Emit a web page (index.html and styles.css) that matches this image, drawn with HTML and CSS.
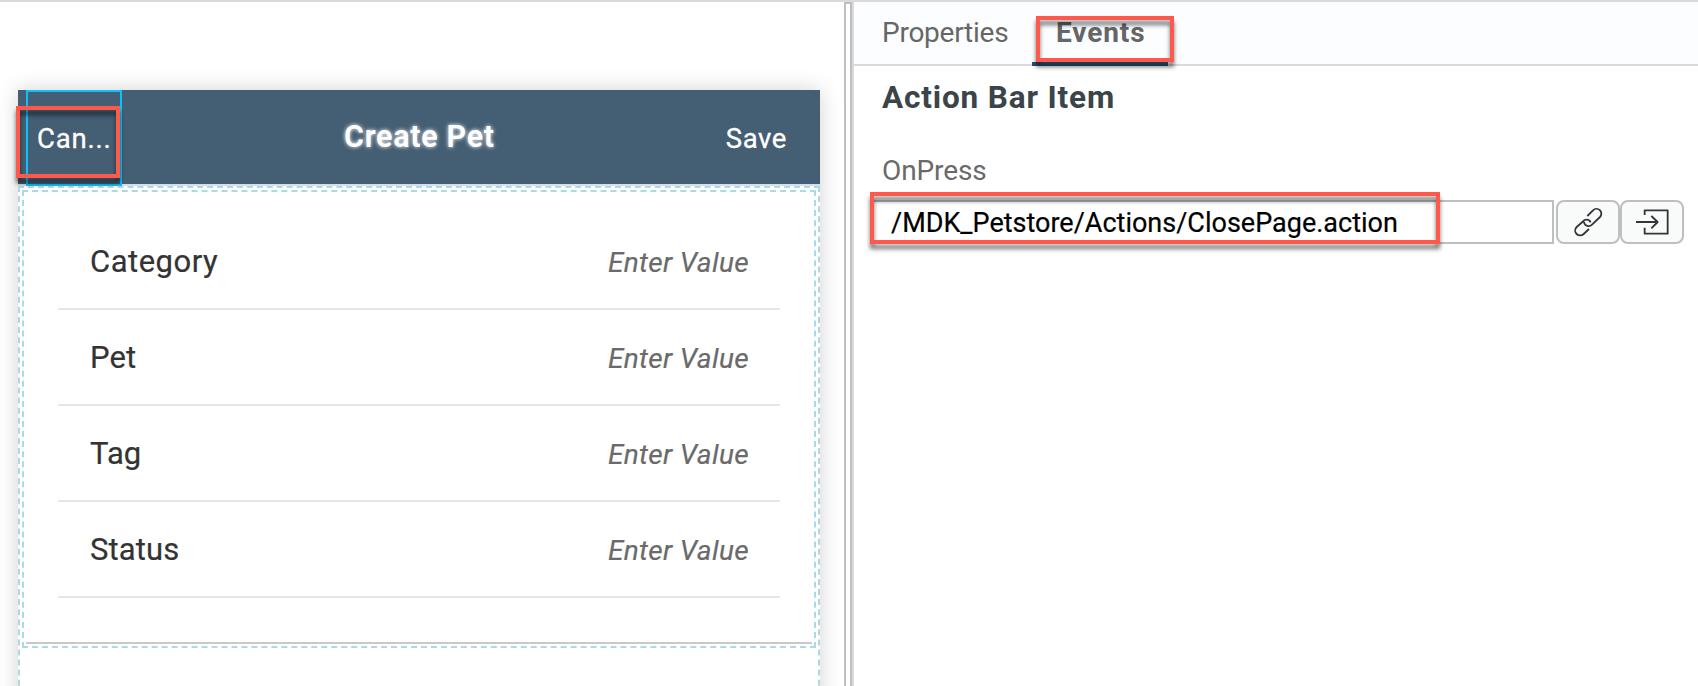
FILE: index.html
```html
<!DOCTYPE html>
<html lang="en">
<head>
<meta charset="utf-8">
<title>Create Pet</title>
<link rel="stylesheet" href="styles.css">
</head>
<body>
<div class="app">
  <main class="canvas">
    <section class="phone">
      <header class="bar">
        <div class="bar-item selected">Can...</div>
        <h1 class="bar-title">Create Pet</h1>
        <div class="bar-save">Save</div>
        <span class="mark mark-cancel"></span>
      </header>
      <div class="page">
        <div class="section">
          <div class="rows">
            <div class="row"><span class="wide">Category</span><em>Enter Value</em></div>
            <div class="row"><span>Pet</span><em>Enter Value</em></div>
            <div class="row"><span>Tag</span><em>Enter Value</em></div>
            <div class="row"><span>Status</span><em>Enter Value</em></div>
          </div>
        </div>
      </div>
    </section>
  </main>
  <div class="splitter"></div>
  <aside class="panel">
    <nav class="tabs">
      <div class="tab">Properties</div>
      <div class="tab active">Events<span class="mark mark-events"></span></div>
    </nav>
    <h2 class="heading">Action Bar Item</h2>
    <div class="label">OnPress</div>
    <div class="field">
      <div class="input">/MDK_Petstore/Actions/ClosePage.action</div>
      <div class="btn">
        <svg viewBox="18 30 192 132"><path d="M112 78L129 61A14 14 0 0 1 150 81L126 104A14 14 0 0 1 102 96M117 117L101 132A14 14 0 0 1 80 111L104 90A14 14 0 0 1 122 97"/></svg>
      </div>
      <div class="btn">
        <svg viewBox="210 30 192 132"><path d="M284 75V61H353V131H284V113M258 96H322M304 78L323 96L304 115"/></svg>
      </div>
      <span class="mark mark-input"></span>
    </div>
  </aside>
</div>
</body>
</html>
```
FILE: styles.css
```css
* { box-sizing: border-box; }
body { margin: 0; background: #fff; font-family: Roboto, "Liberation Sans", sans-serif; }
h1, h2 { margin: 0; }

.app { display: flex; height: 686px; border-top: 2px solid #d9d9de; overflow: hidden; }

/* Device preview */
.canvas { width: 844px; padding: 88px 0 0 18px; }
.phone { width: 802px; height: 640px; background: #fff; box-shadow: 0 0 20px rgba(0, 0, 0, .18); }
.bar { position: relative; display: flex; justify-content: space-between; height: 96px; padding: 0 33px 0 8px; background: #445e73; border-bottom: 2px solid #d3e0ec; color: #fff; font-size: 27.5px; line-height: 97px; }
.bar-item { width: 96px; height: 96px; padding-left: 9px; border: 2px solid #0fc0fa; line-height: 93px; letter-spacing: .8px; -webkit-text-stroke: .3px; }
.bar-title { position: absolute; left: 326px; font-size: 30.5px; line-height: 94px; letter-spacing: .7px; font-weight: 600; text-shadow: 0 0 4px #fff; }
.bar-save { letter-spacing: .6px; -webkit-text-stroke: .3px; }

.page { height: 540px; padding: 2px; border: 2px dashed #add8e6; }
.section { position: relative; height: 458px; padding: 22px 34px 0; border: 2px dashed #add8e6; }
.section::after { content: ""; position: absolute; left: 2px; right: 2px; bottom: 2px; height: 2px; background: #c9c9c9; }
.row { display: flex; align-items: center; justify-content: space-between; height: 96px; padding: 0 31px 0 32px; border-bottom: 2px solid #e5e5e5; color: #333; font-size: 31px; letter-spacing: .1px; -webkit-text-stroke: .2px; }
.row em { padding-top: 3px; color: #6a6a6a; font-size: 28px; letter-spacing: .35px; }
.row .wide { letter-spacing: .5px; }

.splitter { width: 8px; border: 2px solid #bfbfbf; border-bottom: 0; }

/* Property panel */
.panel { flex: 1; border-left: 2px solid #d9d9de; }
.tabs { display: flex; height: 64px; padding-left: 28px; background: #fcfdff; border-bottom: 2px solid #d9d9de; color: #666; font-size: 28px; line-height: 61px; letter-spacing: -.25px; }
.tab { width: 150px; }
.tab.active { position: relative; width: 136px; height: 64px; padding-left: 24px; border-bottom: 4px solid #265072; font-weight: 700; letter-spacing: .9px; }
.heading { padding-left: 28px; color: #3a4449; font-size: 31.5px; line-height: 64px; letter-spacing: .85px; }
.label { padding: 21px 0 0 28px; color: #6a6a6a; font-size: 28px; line-height: 40px; letter-spacing: -.1px; }
.field { position: relative; display: flex; margin: 9px 14px 0 18px; }
.input { width: 682px; height: 44px; margin-right: 2px; padding-left: 17px; border: 2px solid #bfbfbf; color: #000; font-size: 27px; line-height: 42px; -webkit-text-stroke: .2px; }
.btn { width: 64px; height: 44px; border: 2px solid #bfbfbf; border-radius: 8px; background: #f9fbfb; }
.btn svg { display: block; width: 64px; height: 44px; margin: -2px; fill: none; stroke: #32363a; stroke-width: 5.5; stroke-linejoin: round; }

/* Callout frames drawn above the interface */
.mark { position: absolute; border: 4px solid #ff594c; filter: drop-shadow(0 5px 2px rgba(0, 0, 0, .55)); }
.mark-cancel { left: -2px; top: 16px; width: 104px; height: 72px; }
.mark-events { left: 4px; top: 14px; width: 138px; height: 46px; }
.mark-input { left: -2px; top: -8px; width: 570px; height: 52px; }
```
